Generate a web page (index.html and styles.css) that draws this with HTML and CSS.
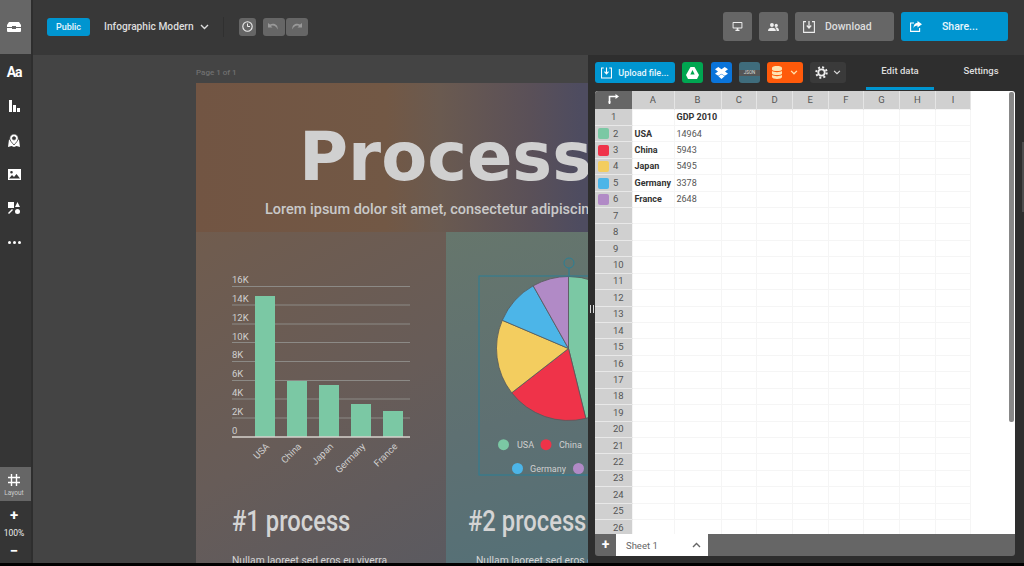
FILE: index.html
```html
<!DOCTYPE html>
<html lang="en">
<head>
  <meta charset="UTF-8" />
  <title>Infographic Modern</title>
  <link rel="stylesheet" href="styles.css">
</head>
<body>
  <div class="app">
    <aside class="sidebar">
      <div class="logo-block">
        <svg width="14" height="10" viewBox="0 0 14 10"><path d="M2 0h10l2 3v2H9V4H5v1H0V3z" fill="#fff"/><path d="M0 6h5v1h4V6h5v3a1 1 0 0 1-1 1H1a1 1 0 0 1-1-1z" fill="#fff"/></svg>
      </div>
      <div class="side-tools">
        <div class="side-tool side-text">Aa</div>
        <div class="side-tool"><svg width="11" height="12" viewBox="0 0 11 12"><path d="M0 0h3v12H0zM4 5h3v7H4zM8 8h3v4H8z" fill="#fff"/></svg></div>
        <div class="side-tool"><svg width="12" height="13" viewBox="0 0 12 13"><path d="M1 5.500L0 13l3.500-1 2.500 1 2.500-1 3.500 1-1-7.500z" fill="#fff"/><path fill-rule="evenodd" d="M6 0a4.300 4.300 0 0 1 4.300 4.300c0 2-2.300 4.500-4.300 6.700C4 8.800 1.700 6.300 1.700 4.300A4.300 4.300 0 0 1 6 0zm0 2.700a1.600 1.600 0 1 0 0 3.200 1.600 1.600 0 0 0 0-3.200z" fill="#fff" stroke="#353535" stroke-width="0.800"/></svg></div>
        <div class="side-tool"><svg width="13" height="11" viewBox="0 0 13 11"><path fill-rule="evenodd" d="M0 0h13v11H0zM1 9.500h11L8.500 5 6 8 4 6zM3.500 2a1.300 1.300 0 1 0 0 2.600 1.300 1.300 0 0 0 0-2.600z" fill="#fff"/></svg></div>
        <div class="side-tool"><svg width="12" height="12" viewBox="0 0 12 12"><path d="M0 0h6v6H0zM9.500 0l2.500 5H7zM1 12l-1-1 4-4 1 1z" fill="#fff"/><circle cx="9.500" cy="9.500" r="2.500" fill="#fff"/></svg></div>
        <div class="side-tool"><svg width="13" height="3" viewBox="0 0 13 3"><circle cx="1.500" cy="1.500" r="1.500" fill="#fff"/><circle cx="6.500" cy="1.500" r="1.500" fill="#fff"/><circle cx="11.500" cy="1.500" r="1.500" fill="#fff"/></svg></div>
      </div>
      <div class="layout-block">
        <svg width="12" height="12" viewBox="0 0 12 12"><path d="M3.500 0v12M8.500 0v12M0 3.500h12M0 8.500h12" stroke="#fff" stroke-width="1.400" fill="none"/></svg>
        <span>Layout</span>
      </div>
      <div class="zoom-box">
        <span class="zoom-btn">+</span>
        <span class="zoom-val">100%</span>
        <span class="zoom-btn">&minus;</span>
      </div>
    </aside>

    <header class="topbar">
      <span class="badge">Public</span>
      <span class="doc-name">Infographic Modern</span>
      <svg class="doc-caret" width="9" height="6" viewBox="0 0 9 6"><path d="M1 1l3.500 3.500L8 1" stroke="#ddd" stroke-width="1.400" fill="none"/></svg>
      <span class="divider"></span>
      <button class="btn btn-clock"><svg width="11" height="11" viewBox="0 0 11 11"><circle cx="5.500" cy="5.500" r="4.700" stroke="#eee" stroke-width="1.100" fill="none"/><path d="M5.500 2.500v3h2.500" stroke="#eee" fill="none"/></svg></button>
      <button class="btn btn-undo"><svg width="11" height="7" viewBox="0 0 11 7"><path d="M0 0v4.500h4.500L3 3c2-1 5-.5 6.500 3.500C10.500 2 6 -.5 2 1.500z" fill="#999"/></svg></button>
      <button class="btn btn-redo"><svg width="11" height="7" viewBox="0 0 11 7"><path d="M11 0v4.500H6.500L8 3C6 2 3 2.500 1.500 6.500.5 2 5 -.5 9 1.500z" fill="#999"/></svg></button>
      <div class="top-right">
        <button class="btn btn-square"><svg width="11" height="9" viewBox="0 0 12 11"><path fill-rule="evenodd" d="M1 0h10a1 1 0 0 1 1 1v6a1 1 0 0 1-1 1H7v1.500h1.500V11h-5V9.500H5V8H1a1 1 0 0 1-1-1V1a1 1 0 0 1 1-1zm.2 1.200v5.600h9.600V1.200z" fill="#eee"/></svg></button>
        <button class="btn btn-square"><svg width="11" height="8" viewBox="0 0 14 10"><circle cx="5" cy="2.500" r="2.500" fill="#eee"/><path d="M0 10c0-3 2-4 5-4s5 1 5 4z" fill="#eee"/><circle cx="10.500" cy="3" r="2" fill="#eee"/><path d="M9 5.500c3-.5 5 1 5 4.500h-3c0-2-.7-3.500-2-4.500z" fill="#eee"/></svg></button>
        <button class="btn btn-wide btn-download">
          <svg width="12" height="12" viewBox="0 0 12 12"><path d="M3 .6H.6v10.800h10.800V.6H9" stroke="#eee" stroke-width="1.100" fill="none"/><path d="M6 0v6.500M3.800 4.500L6 7l2.200-2.500" stroke="#eee" stroke-width="1.200" fill="none"/></svg>
          <span>Download</span>
        </button>
        <button class="btn btn-wide btn-share">
          <svg width="12" height="11" viewBox="0 0 12 11"><path d="M4 2H.6v8.400h9V7" stroke="#fff" stroke-width="1.100" fill="none"/><path d="M7.500 0L12 3.200 7.500 6.400V4.600C5.500 4.600 4 5.500 3.500 7.500 3.500 4 5 2 7.500 1.800z" fill="#fff"/></svg>
          <span>Share...</span>
        </button>
      </div>
    </header>

    <div class="work">
      <main class="canvas">
        <div class="page-label">Page 1 of 1</div>
        <div class="page">
          <section class="hero">
            <h1>Process</h1>
            <p>Lorem ipsum dolor sit amet, consectetur adipiscing elit</p>
          </section>
          <div class="columns">
            <section class="col col-one">
              <svg class="chart" width="249" height="263" viewBox="196 232 249 263">
                <g stroke="#8c8a86" stroke-width="1">
                  <line x1="232" x2="410" y1="286.500" y2="286.500"/>
                  <line x1="232" x2="410" y1="305" y2="305"/>
                  <line x1="232" x2="410" y1="324" y2="324"/>
                  <line x1="232" x2="410" y1="342.500" y2="342.500"/>
                  <line x1="232" x2="410" y1="361.500" y2="361.500"/>
                  <line x1="232" x2="410" y1="380.500" y2="380.500"/>
                  <line x1="232" x2="410" y1="399" y2="399"/>
                  <line x1="232" x2="410" y1="418" y2="418"/>
                </g>
                <g class="tick">
                  <text x="232" y="283">16K</text>
                  <text x="232" y="302">14K</text>
                  <text x="232" y="321">12K</text>
                  <text x="232" y="339.500">10K</text>
                  <text x="232" y="358">8K</text>
                  <text x="232" y="377">6K</text>
                  <text x="232" y="396">4K</text>
                  <text x="232" y="415">2K</text>
                  <text x="232" y="434">0</text>
                </g>
                <g fill="#7bc8a4">
                  <rect x="255" y="296" width="20" height="141"/>
                  <rect x="287" y="381" width="20" height="56"/>
                  <rect x="319" y="385" width="20" height="52"/>
                  <rect x="351" y="404" width="20" height="33"/>
                  <rect x="383" y="411" width="20" height="26"/>
                </g>
                <line x1="232" x2="410" y1="437" y2="437" stroke="#d6d2cc" stroke-width="1.500"/>
                <g class="tick" text-anchor="end">
                  <text transform="translate(270 447) rotate(-45)">USA</text>
                  <text transform="translate(302 447) rotate(-45)">China</text>
                  <text transform="translate(334 447) rotate(-45)">Japan</text>
                  <text transform="translate(366 447) rotate(-45)">Germany</text>
                  <text transform="translate(398 447) rotate(-45)">France</text>
                </g>
              </svg>
              <h2>#1 process</h2>
              <p>Nullam laoreet sed eros eu viverra</p>
            </section>
            <section class="col col-two">
              <svg class="chart" width="300" height="263" viewBox="446 232 300 263">
                <g stroke="#55595c" stroke-width="0.800">
                  <path d="M568.500 348.500V276.500A72 72 0 0 1 585.800 418.400z" fill="#7bc8a4"/>
                  <path d="M568.500 348.500L585.800 418.400A72 72 0 0 1 511.700 392.800z" fill="#ef3349"/>
                  <path d="M568.500 348.500L511.700 392.800A72 72 0 0 1 502.300 320.300z" fill="#f3cd5f"/>
                  <path d="M568.500 348.500L502.300 320.300A72 72 0 0 1 533.200 285.800z" fill="#4cb5e8"/>
                  <path d="M568.500 348.500L533.200 285.800A72 72 0 0 1 568.500 276.500z" fill="#b18ac6"/>
                </g>
                <circle cx="503.500" cy="444.700" r="5.500" fill="#7bc8a4"/>
                <circle cx="546" cy="444.700" r="5.500" fill="#ef3349"/>
                <circle cx="517.500" cy="468.500" r="5.500" fill="#4cb5e8"/>
                <circle cx="578.500" cy="468.500" r="5.500" fill="#b18ac6"/>
                <g class="legend">
                  <text x="517" y="448">USA</text>
                  <text x="559" y="448">China</text>
                  <text x="530" y="472">Germany</text>
                </g>
                <g fill="none" stroke="#2b7f95" stroke-width="1">
                  <rect x="479" y="276" width="240" height="199"/>
                  <line x1="569" x2="569" y1="268" y2="276"/>
                  <circle cx="569" cy="263" r="5"/>
                </g>
              </svg>
              <h2>#2 process</h2>
              <p>Nullam laoreet sed eros eu viverra</p>
            </section>
          </div>
        </div>
      </main>

      <section class="panel">
        <span class="panel-grip"></span>
        <span class="panel-scroll"></span>
        <div class="panel-tools">
          <button class="tool tool-upload">
            <svg width="11" height="12" viewBox="0 0 12 12"><path d="M3 .6H.6v10.800h10.800V.6H9" stroke="#fff" stroke-width="1.100" fill="none"/><path d="M6 0v6.500M3.800 4.500L6 7l2.200-2.500" stroke="#fff" stroke-width="1.200" fill="none"/></svg>
            <span>Upload file...</span>
          </button>
          <button class="tool tool-icon tool-drive"><svg width="13" height="12" viewBox="0 0 13 12"><path fill-rule="evenodd" d="M4.500 0h4L13 8l-2 4H2L0 8zM6.500 3L4.300 7.500h4.400z" fill="#fff"/></svg></button>
          <button class="tool tool-icon tool-dropbox"><svg width="13" height="12" viewBox="0 0 13 12"><path d="M3.300 0l3.200 2.200L9.700 0 13 2.300l-3 2.200 3 2.200-3.300 2.100-3.200-2.100-3.200 2.100L0 6.700l3-2.200-3-2.200zM3.400 9.300l3.100-2 3.100 2L6.500 12z" fill="#fff"/></svg></button>
          <button class="tool tool-icon tool-json"><span>JSON</span></button>
          <button class="tool tool-db">
            <svg width="10" height="13" viewBox="0 0 10 13"><path d="M0 2c0-2.600 10-2.600 10 0v1.500C10 5.500 0 5.500 0 3.500zM0 5c2 1.500 8 1.500 10 0v2.500c0 2-10 2-10 0zM0 9c2 1.500 8 1.500 10 0v2c0 2.600-10 2.600-10 0z" fill="#ffe3b0"/></svg>
            <svg width="8" height="5" viewBox="0 0 9 6"><path d="M1 1l3.500 3.500L8 1" stroke="#ffe3b0" stroke-width="1.500" fill="none"/></svg>
          </button>
          <button class="tool tool-gear">
            <svg width="13" height="13" viewBox="0 0 13 13"><circle cx="6.500" cy="6.500" r="3.200" stroke="#eee" stroke-width="1.800" fill="none"/><circle cx="6.500" cy="6.500" r="5.200" stroke="#eee" stroke-width="2" stroke-dasharray="2 2.080" fill="none"/></svg>
            <svg width="8" height="5" viewBox="0 0 9 6"><path d="M1 1l3.500 3.500L8 1" stroke="#ddd" stroke-width="1.400" fill="none"/></svg>
          </button>
          <div class="tabs">
            <span class="tab tab-active">Edit data</span>
            <span class="tab">Settings</span>
          </div>
        </div>
        <div class="sheet">
          <div class="sheet-body">
            <table class="grid">
              <colgroup>
                <col class="c-head"><col class="c-a"><col class="c-b">
                <col class="c-n"><col class="c-n"><col class="c-n"><col class="c-n"><col class="c-n"><col class="c-n"><col class="c-n">
              </colgroup>
              <thead>
                <tr>
                  <th class="corner"><svg width="11" height="10" viewBox="0 0 11 10"><path d="M1.500 10V2.500H8" stroke="#fff" stroke-width="1.600" fill="none"/><path d="M7.500 0L11 2.500 7.500 5zM0 7.500h3L1.500 10z" fill="#fff"/></svg></th>
                  <th>A</th><th>B</th><th>C</th><th>D</th><th>E</th><th>F</th><th>G</th><th>H</th><th>I</th>
                </tr>
              </thead>
              <tbody>
                <tr><th class="row-one">1</th><td></td><td class="strong">GDP 2010</td><td></td><td></td><td></td><td></td><td></td><td></td><td></td></tr>
                <tr><th><i class="swatch s-green"></i>2</th><td class="strong">USA</td><td>14964</td><td></td><td></td><td></td><td></td><td></td><td></td><td></td></tr>
                <tr><th><i class="swatch s-red"></i>3</th><td class="strong">China</td><td>5943</td><td></td><td></td><td></td><td></td><td></td><td></td><td></td></tr>
                <tr><th><i class="swatch s-yellow"></i>4</th><td class="strong">Japan</td><td>5495</td><td></td><td></td><td></td><td></td><td></td><td></td><td></td></tr>
                <tr><th><i class="swatch s-blue"></i>5</th><td class="strong">Germany</td><td>3378</td><td></td><td></td><td></td><td></td><td></td><td></td><td></td></tr>
                <tr><th><i class="swatch s-purple"></i>6</th><td class="strong">France</td><td>2648</td><td></td><td></td><td></td><td></td><td></td><td></td><td></td></tr>
                <tr><th>7</th><td></td><td></td><td></td><td></td><td></td><td></td><td></td><td></td><td></td></tr>
                <tr><th>8</th><td></td><td></td><td></td><td></td><td></td><td></td><td></td><td></td><td></td></tr>
                <tr><th>9</th><td></td><td></td><td></td><td></td><td></td><td></td><td></td><td></td><td></td></tr>
                <tr><th>10</th><td></td><td></td><td></td><td></td><td></td><td></td><td></td><td></td><td></td></tr>
                <tr><th>11</th><td></td><td></td><td></td><td></td><td></td><td></td><td></td><td></td><td></td></tr>
                <tr><th>12</th><td></td><td></td><td></td><td></td><td></td><td></td><td></td><td></td><td></td></tr>
                <tr><th>13</th><td></td><td></td><td></td><td></td><td></td><td></td><td></td><td></td><td></td></tr>
                <tr><th>14</th><td></td><td></td><td></td><td></td><td></td><td></td><td></td><td></td><td></td></tr>
                <tr><th>15</th><td></td><td></td><td></td><td></td><td></td><td></td><td></td><td></td><td></td></tr>
                <tr><th>16</th><td></td><td></td><td></td><td></td><td></td><td></td><td></td><td></td><td></td></tr>
                <tr><th>17</th><td></td><td></td><td></td><td></td><td></td><td></td><td></td><td></td><td></td></tr>
                <tr><th>18</th><td></td><td></td><td></td><td></td><td></td><td></td><td></td><td></td><td></td></tr>
                <tr><th>19</th><td></td><td></td><td></td><td></td><td></td><td></td><td></td><td></td><td></td></tr>
                <tr><th>20</th><td></td><td></td><td></td><td></td><td></td><td></td><td></td><td></td><td></td></tr>
                <tr><th>21</th><td></td><td></td><td></td><td></td><td></td><td></td><td></td><td></td><td></td></tr>
                <tr><th>22</th><td></td><td></td><td></td><td></td><td></td><td></td><td></td><td></td><td></td></tr>
                <tr><th>23</th><td></td><td></td><td></td><td></td><td></td><td></td><td></td><td></td><td></td></tr>
                <tr><th>24</th><td></td><td></td><td></td><td></td><td></td><td></td><td></td><td></td><td></td></tr>
                <tr><th>25</th><td></td><td></td><td></td><td></td><td></td><td></td><td></td><td></td><td></td></tr>
                <tr><th>26</th><td></td><td></td><td></td><td></td><td></td><td></td><td></td><td></td><td></td></tr>
              </tbody>
            </table>
            <span class="sheet-scroll"></span>
          </div>
          <div class="sheet-foot">
            <span class="add-sheet">+</span>
            <div class="sheet-tab">
              <span>Sheet 1</span>
              <svg width="9" height="6" viewBox="0 0 9 6"><path d="M1 5l3.500-3.500L8 5" stroke="#666" stroke-width="1.400" fill="none"/></svg>
            </div>
          </div>
        </div>
      </section>
    </div>
  </div>
</body>
</html>
```

FILE: styles.css
```css
* {
  box-sizing: border-box;
}
html, body {
  margin: 0;
  height: 566px;
  overflow: hidden;
  background: #000;
  font-family: 'Roboto', sans-serif;
}
button {
  border: none;
  padding: 0;
  font-family: inherit;
  display: flex;
  align-items: center;
  justify-content: center;
}
.app {
  height: 563px;
  display: grid;
  grid-template-columns: 33px 1fr;
  grid-template-rows: 55px 1fr;
}

/* left rail */
.sidebar {
  grid-row: 1 / 3;
  background: #353535;
  border-right: 2px solid #2e2e2e;
  display: flex;
  flex-direction: column;
}
.logo-block {
  height: 54px;
  background: #666;
  display: flex;
  align-items: center;
  justify-content: center;
  margin-bottom: 1px;
  padding-right: 3px;
}
.side-tools {
  flex: 1;
}
.side-tool {
  height: 34px;
  display: flex;
  align-items: center;
  justify-content: center;
  padding-right: 3px;
}
.side-text {
  color: #fff;
  font-size: 14px;
  font-weight: 700;
  letter-spacing: -1.200px;
}
.layout-block {
  height: 34px;
  background: #666;
  display: flex;
  flex-direction: column;
  align-items: center;
  padding: 7px 3px 0 0;
  gap: 3px;
  color: #ccc;
  font-size: 6.500px;
}
.zoom-box {
  height: 62px;
  display: flex;
  flex-direction: column;
  align-items: center;
  color: #eee;
  padding: 6px 3px 0 0;
}
.zoom-btn {
  font-size: 15px;
  font-weight: 700;
  line-height: 16px;
  color: #fff;
}
.zoom-val {
  font-size: 8.500px;
  line-height: 20px;
}

/* top bar */
.topbar {
  background: #383838;
  display: flex;
  align-items: center;
  padding-left: 14px;
  padding-bottom: 2px;
}
.badge {
  background: #0095d0;
  color: #e8f6fc;
  font-size: 9px;
  font-weight: 500;
  width: 43px;
  height: 18px;
  line-height: 18px;
  text-align: center;
  border-radius: 3px;
  margin-right: 14px;
}
.doc-name {
  color: #ddd;
  font-size: 10.200px;
  font-weight: 500;
  margin-right: 6px;
}
.divider {
  width: 1px;
  height: 20px;
  background: #303030;
  margin: 0 15px 0 14px;
}
.btn {
  background: #666;
  border-radius: 3px;
}
.btn-clock {
  width: 17px;
  height: 18px;
  margin-right: 7px;
}
.btn-undo, .btn-redo {
  width: 22px;
  height: 18px;
}
.btn-undo {
  margin-right: 1px;
}
.top-right {
  margin-left: auto;
  padding-right: 16px;
  display: flex;
  gap: 7px;
}
.btn-square {
  width: 29px;
  height: 29px;
}
.btn-wide {
  height: 29px;
  justify-content: flex-start;
  color: #ddd;
  font-size: 10.500px;
  font-weight: 500;
}
.btn-download {
  width: 99px;
  padding-left: 8px;
  gap: 10px;
}
.btn-share {
  width: 107px;
  padding-left: 9px;
  gap: 20px;
  background: #0095d0;
  color: #e8f6fc;
}

/* canvas with the artboard */
.work {
  display: flex;
  min-height: 0;
  min-width: 0;
}
.canvas {
  width: 555px;
  background: #444;
  overflow: hidden;
  padding: 13px 0 0 163px;
}
.page-label {
  color: #707070;
  font-size: 8px;
  font-weight: 500;
  line-height: 10px;
  height: 15px;
}
.page {
  width: 550px;
  height: 600px;
}
.hero {
  height: 149px;
  background: linear-gradient(90deg, #725543 0, #725845 190px, #6a5a50 244px, #5a5058 334px, #4e4c60 384px);
  color: #d0d0d0;
  white-space: nowrap;
  overflow: hidden;
}
.hero h1 {
  margin: 33px 0 0 103px;
  font-family: 'DejaVu Sans', sans-serif;
  font-size: 67px;
  font-weight: 700;
  line-height: 82px;
}
.hero p {
  margin: 2px 0 0 69px;
  font-size: 14.500px;
  font-weight: 500;
  line-height: 20px;
  color: #c9c9c9;
}
.columns {
  display: flex;
  height: 331px;
}
.col {
  overflow: hidden;
  color: #d4d4d4;
}
.col-one {
  width: 250px;
  background: linear-gradient(150deg, #705c4e 0%, #675c58 55%, #5b5a60 100%);
}
.col-two {
  width: 300px;
  background: linear-gradient(165deg, #66766c 0%, #5e7072 50%, #527078 100%);
}
.chart {
  display: block;
}
.tick {
  fill: #cfcfcf;
  font-size: 9.500px;
}
.legend {
  fill: #cfcfcf;
  font-size: 9px;
}
.col h2 {
  margin: 7px 0 0;
  font-family: 'Roboto', sans-serif;
  font-size: 29px;
  font-weight: 500;
  line-height: 38px;
  color: #d4d4d4;
  white-space: nowrap;
  transform: scaleX(0.82);
  transform-origin: left center;
}
.col p {
  margin: 14px 0 0;
  font-size: 10.300px;
  line-height: 14px;
  white-space: nowrap;
}
.col-one h2, .col-one p {
  margin-left: 36px;
}
.col-two h2 {
  margin-left: 22px;
}
.col-two p {
  margin-left: 30px;
}

/* data panel */
.panel {
  position: relative;
  width: 436px;
  background: #2e2e2e;
  padding-left: 7px;
}
.panel-grip {
  position: absolute;
  left: 2px;
  top: 250px;
  width: 4px;
  height: 8px;
  border-left: 1.500px solid #ddd;
  border-right: 1.500px solid #ddd;
}
.panel-scroll {
  position: absolute;
  right: 0;
  top: 87px;
  width: 2px;
  height: 70px;
  background: #4c4c4c;
}
.panel-tools {
  height: 36px;
  display: flex;
  gap: 7px;
  padding-top: 7px;
}
.tool {
  height: 21px;
  border-radius: 3px;
}
.tool-upload {
  width: 80px;
  background: #0095d0;
  color: #e8f6fc;
  font-size: 9px;
  font-weight: 500;
  gap: 6px;
}
.tool-icon {
  width: 21px;
}
.tool-drive {
  background: #00a651;
}
.tool-dropbox {
  background: #0a74da;
  margin-left: 1px;
}
.tool-json {
  background: #3f6c7c;
}
.tool-json span {
  display: block;
  width: 100%;
  color: #ddd;
  background: #555;
  font-size: 4.500px;
  line-height: 6px;
  text-align: center;
}
.tool-db {
  width: 36px;
  background: #ff5a0a;
  gap: 8px;
}
.tool-gear {
  width: 36px;
  background: #3a3a3a;
  gap: 5px;
}
.tabs {
  display: flex;
  margin-left: 13px;
  margin-top: -7px;
  height: 35px;
}
.tab {
  color: #ddd;
  font-size: 9.500px;
  font-weight: 500;
  padding-top: 10px;
  text-align: center;
  width: 68px;
}
.tab + .tab {
  margin-left: 13px;
}
.tab-active {
  border-bottom: 3px solid #0095d0;
}

/* spreadsheet */
.sheet {
  width: 420px;
  height: 465px;
  display: flex;
  flex-direction: column;
  border-radius: 3px;
  overflow: hidden;
}
.sheet-body {
  position: relative;
  flex: 1;
  min-height: 0;
  background: #fff;
  overflow: hidden;
}
.grid {
  border-collapse: collapse;
  table-layout: fixed;
  width: 376px;
  font-size: 9px;
  color: #555;
}
.c-head {
  width: 37px;
}
.c-a {
  width: 42px;
}
.c-b {
  width: 47px;
}
.c-n {
  width: 35.700px;
}
.grid thead th {
  height: 18px;
  background: #d0d0d0;
  border-right: 1px solid #e4e4e4;
  font-weight: 400;
  color: #555;
  font-size: 9.500px;
}
.grid thead .corner {
  background: #666;
  border-right: none;
}
.grid tbody th, .grid td {
  height: 16.430px;
  padding: 0;
  line-height: 10px;
}
.grid tbody th {
  background: #d0d0d0;
  border-bottom: 1px solid #e8e8e8;
  font-weight: 400;
  font-size: 9.500px;
  text-align: left;
  padding-left: 18px;
  position: relative;
  color: #555;
}
.grid tbody .row-one {
  padding-left: 16px;
}
.grid td {
  border: 1px solid #f5f5f5;
  padding-left: 2px;
  white-space: nowrap;
  overflow: hidden;
}
.grid .strong {
  font-weight: 700;
  color: #333;
}
.swatch {
  position: absolute;
  left: 3px;
  top: 2.500px;
  width: 11px;
  height: 11px;
  border-radius: 2px;
}
.s-green { background: #7bc8a4; }
.s-red { background: #ef3349; }
.s-yellow { background: #f3cd5f; }
.s-blue { background: #4cb5e8; }
.s-purple { background: #b18ac6; }
.sheet-scroll {
  position: absolute;
  right: 1px;
  top: 1px;
  width: 5px;
  height: 330px;
  background: #888;
  border-radius: 2px;
}
.sheet-foot {
  height: 22px;
  background: #666;
  display: flex;
}
.add-sheet {
  width: 21px;
  text-align: center;
  color: #fff;
  font-size: 14px;
  font-weight: 700;
  line-height: 20px;
}
.sheet-tab {
  width: 92px;
  background: #fff;
  color: #666;
  font-size: 9.500px;
  display: flex;
  align-items: center;
  justify-content: space-between;
  padding: 0 7px 0 10px;
}
```
